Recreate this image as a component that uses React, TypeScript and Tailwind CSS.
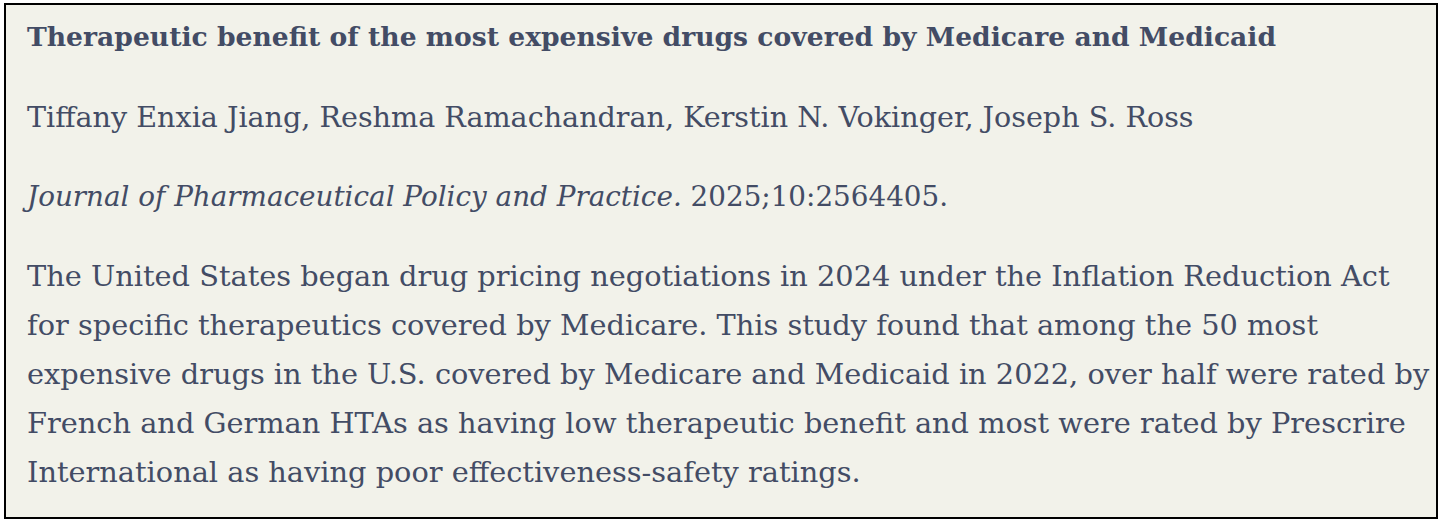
export default function App() {
  return (
    <div className="min-h-screen bg-white pt-[3px] pl-[4px]">
      <div
        className="h-[516px] w-[1434px] border-2 border-black bg-[#f2f2ea] px-[21px] text-[#434c65]"
        style={{ fontFamily: '"DejaVu Serif", "Liberation Serif", serif' }}
      >
        <h2 className="pt-[14px] text-[26.6px] leading-[36px] font-bold whitespace-nowrap">
          Therapeutic benefit of the most expensive drugs covered by Medicare and Medicaid
        </h2>

        <p className="mt-[42px] text-[28.6px] leading-[40px] whitespace-nowrap">
          Tiffany Enxia Jiang, Reshma Ramachandran, Kerstin N. Vokinger, Joseph S. Ross
        </p>

        <p className="mt-[40px] text-[27.8px] leading-[40px] whitespace-nowrap">
          <em>Journal of Pharmaceutical Policy and Practice.</em> 2025;10:2564405.
        </p>

        <p className="mt-[35px] text-[28.8px] leading-[49px] whitespace-nowrap">
          The United States began drug pricing negotiations in 2024 under the Inflation Reduction Act
          <br />
          for specific therapeutics covered by Medicare. This study found that among the 50 most
          <br />
          expensive drugs in the U.S. covered by Medicare and Medicaid in 2022, over half were rated by
          <br />
          French and German HTAs as having low therapeutic benefit and most were rated by Prescrire
          <br />
          International as having poor effectiveness-safety ratings.
        </p>
      </div>
    </div>
  );
}
